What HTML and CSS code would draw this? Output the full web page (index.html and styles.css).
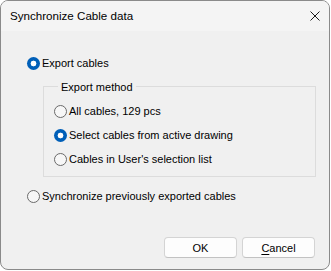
FILE: index.html
```html
<!DOCTYPE html>
<html>
<head>
<meta charset="utf-8">
<link rel="stylesheet" href="styles.css">
</head>
<body>
<div class="window">
  <div class="titlebar">
    <span class="title">Synchronize Cable data</span>
    <svg class="close" width="10" height="10" viewBox="0 0 10 10"><path d="M0.5 0.5 L9.5 9.5 M9.5 0.5 L0.5 9.5" stroke="#1a1a1a" stroke-width="1" fill="none"/></svg>
  </div>
  <div class="content">
    <label class="radio-row top-row"><span class="radio checked"></span><span>Export cables</span></label>
    <div class="group">
      <div class="group-label">Export method</div>
      <div class="group-body">
        <label class="radio-row"><span class="radio"></span><span>All cables, 129 pcs</span></label>
        <label class="radio-row"><span class="radio checked"></span><span>Select cables from active drawing</span></label>
        <label class="radio-row"><span class="radio"></span><span>Cables in User's selection list</span></label>
      </div>
    </div>
    <label class="radio-row sync-row"><span class="radio"></span><span>Synchronize previously exported cables</span></label>
    <div class="buttons">
      <button class="btn">OK</button>
      <button class="btn"><u>C</u>ancel</button>
    </div>
  </div>
</div>
</body>
</html>
```
FILE: styles.css
```css
html, body {
  margin: 0;
  padding: 0;
  background: #ffffff;
}
body {
  font-family: "Liberation Sans", Arial, sans-serif;
  font-size: 11px;
  color: #000;
}
.window {
  width: 330px;
  height: 270px;
  box-sizing: border-box;
  border: 1px solid #8a8a8a;
  border-radius: 8px;
  background: #f0f0f0;
  display: flex;
  flex-direction: column;
  overflow: hidden;
}
.titlebar {
  height: 30px;
  flex: none;
  background: #f4f4f4;
  display: flex;
  align-items: center;
  padding-left: 9px;
  padding-right: 9px;
}
.title {
  flex: 1;
  font-size: 11.6px;
  line-height: 16px;
  margin-top: -1px;
}
.close {
  display: block;
  margin-top: -1px;
}
.content {
  flex: 1;
  display: flex;
  flex-direction: column;
  padding: 0 13px 11px 26px;
}
.radio-row {
  display: flex;
  align-items: center;
  height: 16px;
  line-height: 16px;
  gap: 2px;
  white-space: nowrap;
}
.top-row {
  margin-top: 24px;
}
.radio {
  width: 13px;
  height: 13px;
  box-sizing: border-box;
  border-radius: 50%;
  border: 1px solid #6a6a6a;
  background: #f7f7f7;
  flex: none;
}
.radio.checked {
  border: none;
  background: radial-gradient(circle, #ffffff 0 2.6px, #005fb8 3.2px);
}
.group {
  margin-top: 15px;
  margin-left: 16px;
  border: 1px solid #dcdcdc;
  padding: 0 0 9px 10px;
}
.group-label {
  width: fit-content;
  margin-top: -8px;
  margin-left: 4px;
  padding: 0 3px;
  background: #f0f0f0;
  line-height: 16px;
  margin-bottom: 8px;
}
.group-body {
  display: flex;
  flex-direction: column;
  gap: 8px;
}
.sync-row {
  margin-top: 11px;
}
.buttons {
  margin-top: auto;
  display: flex;
  justify-content: flex-end;
  gap: 5px;
  padding-right: 1px;
}
.btn {
  width: 73px;
  height: 21px;
  box-sizing: border-box;
  background: #fdfdfd;
  border: 1px solid #d4d4d4;
  border-bottom-color: #c2c2c2;
  border-radius: 4px;
  font-family: inherit;
  font-size: 11px;
  color: #000;
  padding: 0;
  line-height: 18px;
}
.btn u {
  text-decoration-thickness: 1px;
  text-underline-offset: 2px;
}
```
